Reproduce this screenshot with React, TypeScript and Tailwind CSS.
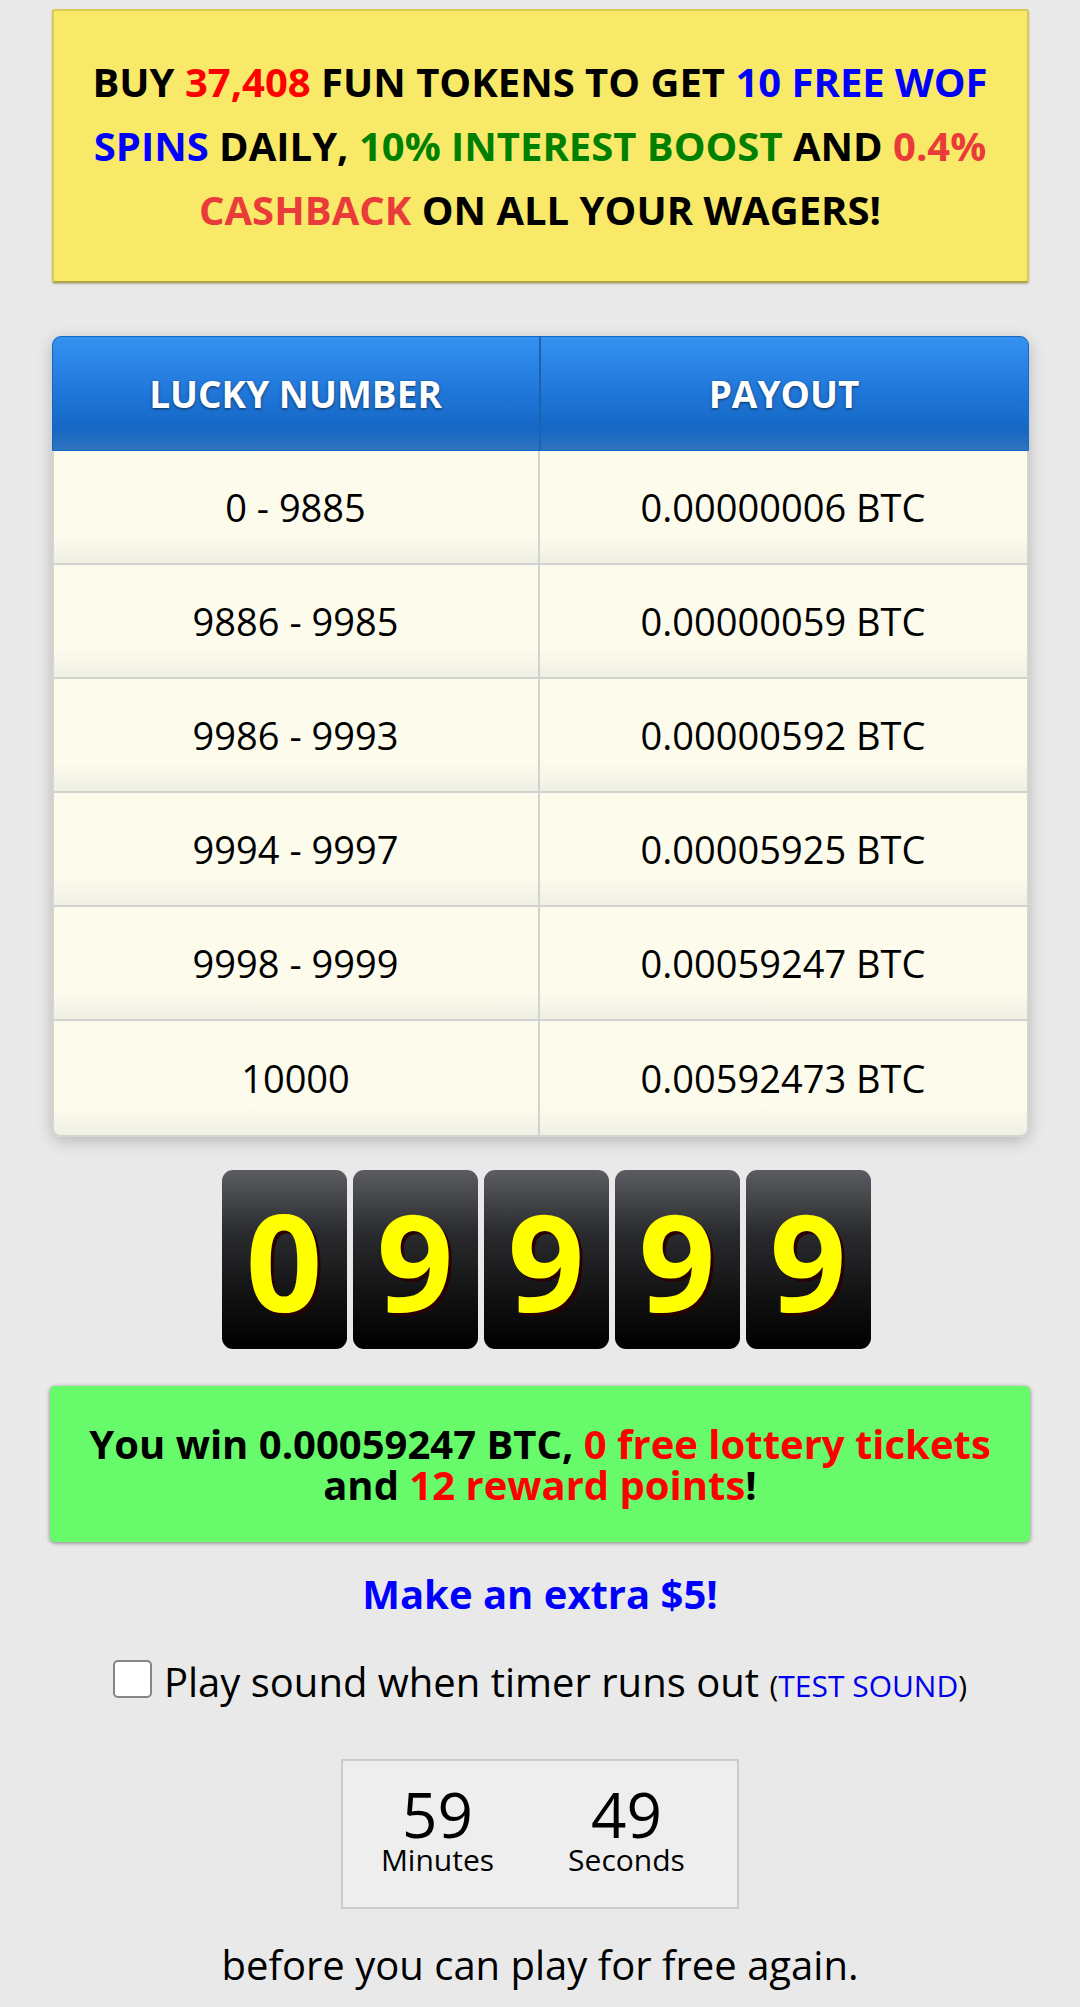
import React from 'react';

const rows = [
  ['0 - 9885', '0.00000006 BTC'],
  ['9886 - 9985', '0.00000059 BTC'],
  ['9986 - 9993', '0.00000592 BTC'],
  ['9994 - 9997', '0.00005925 BTC'],
  ['9998 - 9999', '0.00059247 BTC'],
  ['10000', '0.00592473 BTC'],
];

const digits = ['0', '9', '9', '9', '9'];

const App: React.FC = () => {
  return (
    <main className="min-h-screen bg-[#e9e9e9] pt-[9px] pb-[20px] font-['Open_Sans',sans-serif] text-black">
      <div className="mx-auto w-[977px] rounded-[3px] border-2 border-[#d8ca52] border-b-[#b5a745] bg-[#f8e968] px-[30px] py-[39px] text-center text-[40px] font-bold leading-[64px] shadow-[0_1px_2px_rgba(0,0,0,0.25)]">
        BUY <span className="text-[#ff0000]">37,408</span> FUN TOKENS TO GET{' '}
        <span className="text-[#0000ff]">10 FREE WOF SPINS</span> DAILY,{' '}
        <span className="text-[#008000]">10% INTEREST BOOST</span> AND{' '}
        <span className="text-[#ea3b3b]">0.4% CASHBACK</span> ON ALL YOUR WAGERS!
      </div>

      <div className="mx-auto mt-[53px] w-[977px] rounded-[9px] shadow-[0_4px_16px_rgba(0,0,0,0.22)]">
        <div className="grid h-[115px] grid-cols-[488px_1fr] rounded-t-[9px] border border-[#1566c2] bg-[linear-gradient(180deg,#3591f0_0%,#2179dc_45%,#1567c4_82%,#2f74bd_100%)] text-[37px] font-bold text-white [text-shadow:0_1px_3px_rgba(0,0,0,0.6)]">
          <div className="flex items-center justify-center border-r-2 border-[#1a62b4]">LUCKY NUMBER</div>
          <div className="flex items-center justify-center">PAYOUT</div>
        </div>
        <div className="overflow-hidden rounded-b-[9px] border-x-2 border-b-2 border-[#d4d4d0]">
          {rows.map(([num, pay], i) => (
            <div
              key={num}
              className={`grid h-[114px] grid-cols-[486px_1fr] bg-[linear-gradient(180deg,#fcfbec_0%,#fcfbec_75%,#f0efe4_100%)] text-[38px] ${i < rows.length - 1 ? 'border-b-2 border-[#d2d2d0]' : ''}`}
            >
              <div className="flex items-center justify-center border-r-2 border-[#d2d2d0]">{num}</div>
              <div className="flex items-center justify-center">{pay}</div>
            </div>
          ))}
        </div>
      </div>

      <div className="mt-[33px] flex justify-center gap-[6px] pl-[12px]">
        {digits.map((d, i) => (
          <div
            key={i}
            className="flex h-[179px] w-[125px] items-center justify-center rounded-[11px] bg-[linear-gradient(180deg,#5c5d62_0%,#2a2b2e_35%,#121213_70%,#000000_100%)] text-[134px] font-bold leading-none text-[#ffff00] [text-shadow:3px_3px_0_#2a0000]"
          >
            {d}
          </div>
        ))}
      </div>

      <div className="mx-auto mt-[37px] flex h-[156px] w-[980px] flex-col items-center justify-center rounded-[5px] bg-[#67fa6a] text-center text-[40px] font-bold leading-[41px] shadow-[0_1px_4px_rgba(0,0,0,0.45)]">
        <p>
          You win 0.00059247 BTC, <span className="text-[#ff0000]">0 free lottery tickets</span>
        </p>
        <p>
          and <span className="text-[#ff0000]">12 reward points</span>!
        </p>
      </div>

      <p className="mt-[26px] text-center text-[40px] font-bold leading-[52px] text-[#0000ff]">Make an extra $5!</p>

      <div className="mt-[38px] flex items-end justify-center">
        <span className="mb-[12px] mr-[12px] h-[38px] w-[39px] rounded-[5px] border-2 border-[#858585] bg-white" />
        <span className="text-[40px] leading-[48px]">
          Play sound when timer runs out{' '}
          <span className="text-[30px]">
            (<span className="text-[#0000ee]">TEST SOUND</span>)
          </span>
        </span>
      </div>

      <div className="mx-auto mt-[49px] flex w-[398px] justify-center border-2 border-[#cccccc] bg-[#eeeeee] pb-[32px] pr-[16px] pt-[22px]">
        <div className="flex w-[190px] flex-col items-center">
          <span className="text-[62px] leading-[62px]">59</span>
          <span className="text-[30px] leading-[30px]">Minutes</span>
        </div>
        <div className="flex w-[190px] flex-col items-center">
          <span className="text-[62px] leading-[62px]">49</span>
          <span className="text-[30px] leading-[30px]">Seconds</span>
        </div>
      </div>

      <p className="mt-[30px] text-center text-[40px] leading-[52px]">before you can play for free again.</p>
    </main>
  );
};

export default App;
